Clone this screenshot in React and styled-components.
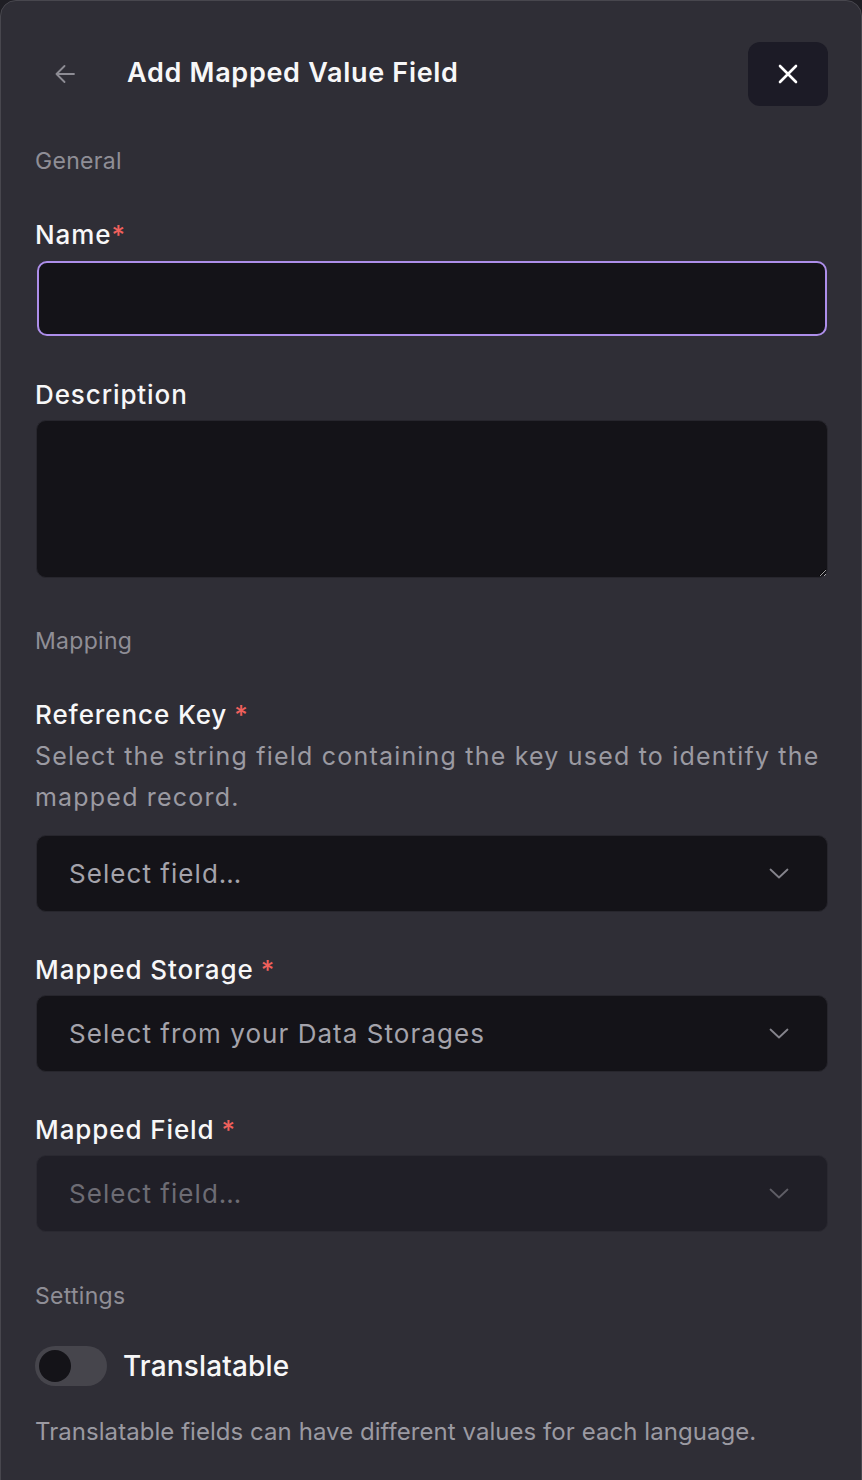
import React from "react";
import styled, { createGlobalStyle } from "styled-components";

const Global = createGlobalStyle`
  html, body { margin: 0; padding: 0; background: #1f1e24; }
  body { font-family: Inter, "Noto Sans", sans-serif; -webkit-font-smoothing: antialiased; }
  * { box-sizing: border-box; }
`;

const Panel = styled.div`
  width: 862px;
  min-height: 1520px;
  background: #2f2e36;
  border: 1px solid #48474e;
  border-radius: 16px;
  padding: 41px 33px 40px 34px;
  display: flex;
  flex-direction: column;
`;

const Header = styled.div`
  height: 64px;
  display: flex;
  align-items: center;
`;

const BackButton = styled.button`
  width: 20px;
  height: 20px;
  margin-left: 20px;
  margin-right: 52px;
  padding: 0;
  border: none;
  background: none;
  display: flex;
  align-items: center;
  justify-content: center;
  color: #8d8c94;
`;

const Title = styled.h1`
  flex: 1;
  margin: 0 0 3px;
  font-size: 27px;
  font-weight: 600;
  color: #f7f7f8;
  letter-spacing: 0.7px;
`;

const CloseButton = styled.button`
  width: 80px;
  height: 64px;
  border: none;
  border-radius: 12px;
  background: #1c1b26;
  color: #ffffff;
  display: flex;
  align-items: center;
  justify-content: center;
  padding: 0;
`;

const SectionHeading = styled.div`
  margin-top: ${(p) => p.$mt}px;
  font-size: 23px;
  line-height: 30px;
  letter-spacing: 0.3px;
  color: #8f8e96;
`;

const Field = styled.div`
  margin-top: ${(p) => p.$mt}px;
  display: flex;
  flex-direction: column;
`;

const Label = styled.label`
  font-size: 26px;
  line-height: 34px;
  font-weight: 500;
  letter-spacing: 0.9px;
  color: #f7f7f8;
  margin-bottom: ${(p) => p.$mb ?? 8}px;
`;

const Star = styled.span`
  color: #f0605c;
  margin-left: ${(p) => (p.$spaced ? 7 : 0)}px;
`;

const Help = styled.p`
  margin: 0 0 ${(p) => p.$mb ?? 0}px;
  font-size: 25px;
  line-height: 41px;
  letter-spacing: 1.2px;
  color: #9b9aa2;
`;

const TextInput = styled.input`
  margin-left: 2px;
  width: 790px;
  height: 75px;
  border-radius: 10px;
  border: 2px solid #ad8eea;
  background: #141318;
  outline: none;
  color: #fff;
  font: inherit;
  font-size: 26px;
  padding: 0 30px;
`;

const TextArea = styled.textarea`
  margin-left: 1px;
  width: 792px;
  height: 158px;
  border-radius: 10px;
  border: 1px solid #27262d;
  background: #141318;
  outline: none;
  color: #fff;
  font: inherit;
  font-size: 26px;
  padding: 14px 30px;
  resize: vertical;
  display: block;
`;

const Select = styled.div`
  margin-left: 1px;
  width: 792px;
  height: 77px;
  border-radius: 10px;
  border: 1px solid ${(p) => (p.$disabled ? "#2a2931" : "#27262d")};
  background: ${(p) => (p.$disabled ? "#201f27" : "#141318")};
  display: flex;
  align-items: center;
  justify-content: space-between;
  padding: 0 38px 0 32px;
`;

const Placeholder = styled.span`
  font-size: 26px;
  letter-spacing: 1.05px;
  color: ${(p) => (p.$disabled ? "#6d6c74" : "#a4a3ab")};
`;

const ToggleRow = styled.div`
  margin-top: 35px;
  display: flex;
  align-items: center;
  gap: 16px;
`;

const Toggle = styled.div`
  width: 72px;
  height: 40px;
  border-radius: 20px;
  background: #46454c;
  display: flex;
  align-items: center;
  padding-left: 4px;
`;

const Knob = styled.div`
  width: 32px;
  height: 32px;
  border-radius: 50%;
  background: #141318;
`;

const ToggleLabel = styled.span`
  font-size: 28px;
  font-weight: 500;
  letter-spacing: 0.15px;
  color: #f7f7f8;
`;

const FootHelp = styled.p`
  margin: 31px 0 0;
  font-size: 24px;
  line-height: 30px;
  letter-spacing: 0.05px;
  color: #9b9aa2;
`;

const Chevron = ({ disabled }) => (
  <svg width="20" height="11" viewBox="0 0 20 11" fill="none">
    <path
      d="M1.5 1.5 L10 9.5 L18.5 1.5"
      stroke={disabled ? "#5f5e66" : "#85848c"}
      strokeWidth="1.8"
      strokeLinecap="round"
      strokeLinejoin="round"
    />
  </svg>
);

const SelectBox = ({ text, disabled }) => (
  <Select $disabled={disabled}>
    <Placeholder $disabled={disabled}>{text}</Placeholder>
    <Chevron disabled={disabled} />
  </Select>
);

export default function App() {
  return (
    <>
      <Global />
      <Panel>
        <Header>
          <BackButton aria-label="Back">
            <svg width="20" height="18" viewBox="0 0 20 18" fill="none">
              <path
                d="M19 9 H1.5 M9.5 1 L1.5 9 L9.5 17"
                stroke="currentColor"
                strokeWidth="1.8"
                strokeLinecap="round"
                strokeLinejoin="round"
              />
            </svg>
          </BackButton>
          <Title>Add Mapped Value Field</Title>
          <CloseButton aria-label="Close">
            <svg width="20" height="20" viewBox="0 0 20 20" fill="none">
              <path
                d="M2 2 L18 18 M18 2 L2 18"
                stroke="currentColor"
                strokeWidth="2.6"
                strokeLinecap="round"
              />
            </svg>
          </CloseButton>
        </Header>

        <SectionHeading $mt={40}>General</SectionHeading>

        <Field $mt={42}>
          <Label $mb={9}>
            Name<Star>*</Star>
          </Label>
          <TextInput />
        </Field>

        <Field $mt={42}>
          <Label>Description</Label>
          <TextArea />
        </Field>

        <SectionHeading $mt={48}>Mapping</SectionHeading>

        <Field $mt={42}>
          <Label $mb={4}>
            Reference Key<Star $spaced>*</Star>
          </Label>
          <Help $mb={17}>
            Select the string field containing the key used to identify the
            mapped record.
          </Help>
          <SelectBox text="Select field…" />
        </Field>

        <Field $mt={41}>
          <Label>
            Mapped Storage<Star $spaced>*</Star>
          </Label>
          <SelectBox text="Select from your Data Storages" />
        </Field>

        <Field $mt={41}>
          <Label>
            Mapped Field<Star $spaced>*</Star>
          </Label>
          <SelectBox text="Select field…" disabled />
        </Field>

        <SectionHeading $mt={49}>Settings</SectionHeading>

        <ToggleRow>
          <Toggle>
            <Knob />
          </Toggle>
          <ToggleLabel>Translatable</ToggleLabel>
        </ToggleRow>

        <FootHelp>Translatable fields can have different values for each language.</FootHelp>
      </Panel>
    </>
  );
}
